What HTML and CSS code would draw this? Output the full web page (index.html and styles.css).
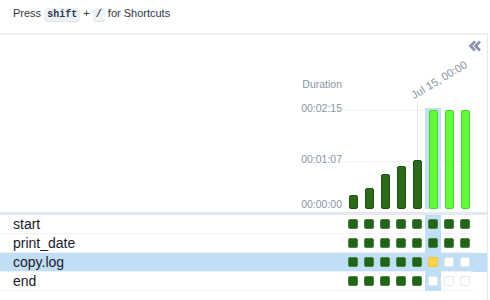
FILE: index.html
```html
<!DOCTYPE html>
<html lang="en">
<head>
    <meta charset="UTF-8">
    <title>DAG Grid</title>
    <link rel="stylesheet" href="styles.css">
</head>
<body>

<p class="hint">Press <kbd>shift</kbd> + <kbd>/</kbd> for Shortcuts</p>

<div class="grid-panel">
    <button class="collapse-btn" title="Collapse details">
        <svg width="14" height="12" viewBox="0 0 14 12"><path d="M7 1.5 2.5 6 7 10.5M12 1.5 7.5 6 12 10.5" fill="none" stroke="#8792a8" stroke-width="2.6"/></svg>
    </button>

    <div class="chart">
        <div class="axis">
            <span class="axis-title">Duration</span>
            <span class="tick tick-top">00:02:15</span>
            <span class="tick tick-mid">00:01:07</span>
            <span class="tick tick-zero">00:00:00</span>
        </div>
        <div class="bars" id="bars">
            <div class="gridline" style="top: 75px"></div>
            <div class="gridline" style="top: 126px"></div>
        </div>
        <div class="chart-end"></div>
    </div>

    <div class="task-rows" id="taskRows"></div>
</div>

<script>
    // duration in px, state per run
    const runs = [
        { height: 14, state: 'success' },
        { height: 21, state: 'success' },
        { height: 35, state: 'success' },
        { height: 43, state: 'success' },
        { height: 49, state: 'success', label: 'Jul 15, 00:00' },
        { height: 99, state: 'running' },
        { height: 99, state: 'running' },
        { height: 99, state: 'running' }
    ];
    const selectedRun = 5;

    const tasks = [
        { name: 'start', states: ['success', 'success', 'success', 'success', 'success', 'success', 'success', 'success'] },
        { name: 'print_date', states: ['success', 'success', 'success', 'success', 'success', 'success', 'success', 'success'] },
        { name: 'copy.log', states: ['success', 'success', 'success', 'success', 'success', 'retry', 'none', 'none'], selected: true },
        { name: 'end', states: ['success', 'success', 'success', 'success', 'success', 'none', 'none', 'none'] }
    ];

    const bars = document.getElementById('bars');
    runs.forEach((run, i) => {
        const col = document.createElement('div');
        col.className = 'bar-col';
        if (run.label) {
            col.classList.add('marked');
            const label = document.createElement('span');
            label.className = 'date-label';
            label.textContent = run.label;
            col.appendChild(label);
        }
        const wrap = document.createElement('div');
        wrap.className = 'bar-wrap' + (i === selectedRun ? ' selected' : '');
        const bar = document.createElement('div');
        bar.className = `bar ${run.state}`;
        bar.style.height = `${run.height}px`;
        wrap.appendChild(bar);
        col.appendChild(wrap);
        bars.appendChild(col);
    });

    const taskRows = document.getElementById('taskRows');
    tasks.forEach(task => {
        const row = document.createElement('div');
        row.className = 'task-row' + (task.selected ? ' selected' : '');
        const main = document.createElement('div');
        main.className = 'row-main';
        const name = document.createElement('span');
        name.className = 'task-name';
        name.textContent = task.name;
        main.appendChild(name);
        task.states.forEach((state, i) => {
            const cell = document.createElement('div');
            cell.className = 'cell' + (i === selectedRun ? ' selected' : '');
            const square = document.createElement('span');
            square.className = `square ${state}`;
            cell.appendChild(square);
            main.appendChild(cell);
        });
        row.appendChild(main);
        taskRows.appendChild(row);
    });
</script>

</body>
</html>
```

FILE: styles.css
```css
body {
    font-family: 'Liberation Sans', Arial, sans-serif;
    margin: 0;
    background-color: #ffffff;
    color: #1a202c;
}

.hint {
    margin: 0;
    padding: 5px 13px 12px;
    font-size: 11px;
    line-height: 16px;
    color: #2d3748;
}

.hint kbd {
    font-family: 'Liberation Mono', monospace;
    font-weight: bold;
    font-size: 10px;
    line-height: 12px;
    padding: 1px 3px;
    background-color: #edf2f7;
    border-bottom: 1px solid #dde3ec;
    border-radius: 4px;
}

/* Grid panel */
.grid-panel {
    position: relative;
    margin-right: 2px;
    border-top: 2px solid #edf2f7;
    border-right: 1px solid #e6ebf1;
    height: 265px;
}

.collapse-btn {
    position: absolute;
    top: 5px;
    right: 5px;
    padding: 0;
    border: none;
    background: none;
    cursor: pointer;
}

.chart {
    display: flex;
    align-items: flex-end;
    height: 177px;
}

.axis {
    width: 345px;
    display: flex;
    flex-direction: column;
    align-items: flex-end;
    padding-right: 3px;
    box-sizing: border-box;
    padding-bottom: 1px;
    font-size: 10.5px;
    line-height: 14px;
    color: #8a94a6;
}

.axis-title {
    margin-bottom: 10px;
}

.tick-mid {
    margin-top: 37px;
}

.tick-zero {
    margin-top: 31px;
}

.bars {
    position: relative;
    display: flex;
    align-items: flex-end;
    height: 174px;
    margin-bottom: 3px;
}

.gridline {
    position: absolute;
    left: 0;
    right: 0;
    height: 1px;
    background-color: #edf2f7;
}

.chart-end {
    flex: 1;
}

.bar-col {
    position: relative;
    width: 16px;
    height: 100%;
    display: flex;
    align-items: flex-end;
}

.bar-col.marked::before {
    content: '';
    position: absolute;
    left: 8px;
    bottom: 0;
    width: 1px;
    height: 107px;
    background-color: #e2e8f0;
}

.date-label {
    position: absolute;
    left: 6px;
    bottom: 108px;
    white-space: nowrap;
    font-size: 11px;
    line-height: 12px;
    color: #8a94a6;
    transform: rotate(-31deg);
    transform-origin: 0 100%;
}

.bar-wrap {
    position: relative;
    width: 16px;
    padding-top: 2px;
    display: flex;
    justify-content: center;
}

.bar-wrap.selected {
    background-color: #c4e0f5;
}

.bar {
    width: 9px;
    box-sizing: border-box;
    border-radius: 2px;
    border: 1px solid #1d5212;
}

.bar.success {
    background-color: #2e6a1e;
}

.bar.running {
    background-color: #64fa3c;
    border-color: #46d828;
}

/* Task rows */
.task-rows {
    border-top: 3px solid #e4e9f0;
}

.task-row.selected {
    background-color: #c0def5;
}

.row-main {
    display: flex;
    width: 473px;
    height: 18px;
    border-bottom: 1px solid #edf2f7;
}

.task-name {
    flex: 1;
    padding-left: 13px;
    font-size: 14px;
    line-height: 18px;
    color: #1a202c;
}

.cell {
    width: 16px;
    height: 18px;
    display: flex;
    align-items: center;
    justify-content: center;
}

.cell.selected {
    height: 19px;
    padding-bottom: 1px;
    box-sizing: border-box;
    margin-bottom: -1px;
    background-color: #c0def5;
}

.square {
    width: 10px;
    height: 10px;
    box-sizing: border-box;
    border-radius: 2px;
    border: 1px solid #e2e8f0;
    background-color: #ffffff;
}

.square.success {
    background-color: #22621a;
    border-color: #46853a;
}

.square.retry {
    background-color: #fcd34d;
    border-color: #f4c43a;
}
```
